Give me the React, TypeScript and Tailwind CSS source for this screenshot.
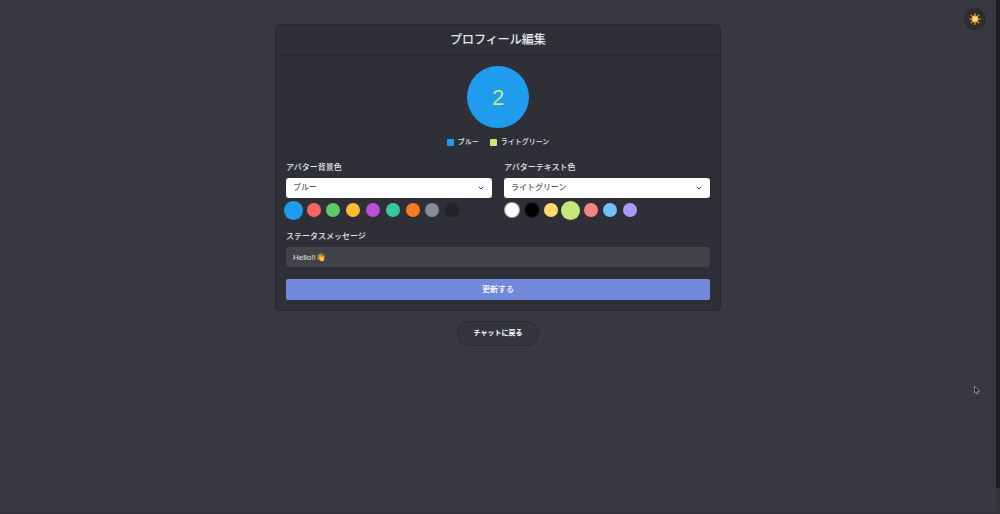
import { useState } from 'react';
import { ChevronDown } from 'lucide-react';

type ColorOption = { name: string; value: string; ring?: string };

const backgroundColors: ColorOption[] = [
  { name: 'ブルー', value: '#209cee' },
  { name: 'レッド', value: '#fc6468' },
  { name: 'グリーン', value: '#5bcb6c' },
  { name: 'イエロー', value: '#fdbd2e' },
  { name: 'パープル', value: '#b94fd6' },
  { name: 'ティール', value: '#38c99a' },
  { name: 'オレンジ', value: '#fb7a1e' },
  { name: 'グレー', value: '#868e96' },
  { name: 'ダーク', value: '#222427', ring: 'ring-1 ring-[#27292d]' },
];

const textColors: ColorOption[] = [
  { name: 'ホワイト', value: '#ffffff', ring: 'ring-1 ring-[#a5a7ab]' },
  { name: 'ブラック', value: '#020203', ring: 'ring-1 ring-[#222327]' },
  { name: 'ライトイエロー', value: '#ffdb6e' },
  { name: 'ライトグリーン', value: '#c3e978' },
  { name: 'ライトレッド', value: '#f98385' },
  { name: 'ライトブルー', value: '#74c0fa' },
  { name: 'ライトパープル', value: '#a99af8' },
];

type ColorFieldProps = {
  id: string;
  label: string;
  options: ColorOption[];
  value: string;
  columns: string;
  onChange: (value: string) => void;
};

function ColorField({ id, label, options, value, columns, onChange }: ColorFieldProps) {
  return (
    <div className="min-w-0 flex-1">
      <label htmlFor={id} className="block text-[8px] leading-3 font-medium">
        {label}
      </label>
      <div className="relative mt-1">
        <select
          id={id}
          value={value}
          onChange={(e) => onChange(e.target.value)}
          className="block h-5 w-full appearance-none rounded-[3px] bg-white px-[7px] text-[8px] font-medium text-[#5a6068]"
        >
          {options.map((option) => (
            <option key={option.value} value={option.value}>
              {option.name}
            </option>
          ))}
        </select>
        <ChevronDown className="pointer-events-none absolute top-1.5 right-[7px] size-2 text-[#495057]" strokeWidth={3} />
      </div>
      <div className={`-ml-0.5 mt-[2px] grid h-5 items-center justify-items-center ${columns}`}>
        {options.map((option) => (
          <button
            key={option.value}
            type="button"
            aria-label={option.name}
            onClick={() => onChange(option.value)}
            className={`rounded-full ${option.ring ?? ''} ${option.value === value ? 'size-[19px]' : 'size-[14px]'}`}
            style={{ backgroundColor: option.value }}
          />
        ))}
      </div>
    </div>
  );
}

function Legend({ color }: { color: ColorOption }) {
  return (
    <span className="flex items-center gap-1">
      <span className="size-[7px] rounded-[1px]" style={{ backgroundColor: color.value }} />
      {color.name}
    </span>
  );
}

export default function App() {
  const [background, setBackground] = useState('#209cee');
  const [text, setText] = useState('#c3e978');
  const [status, setStatus] = useState('Hello!!👋');

  const backgroundColor = backgroundColors.find((c) => c.value === background)!;
  const textColor = textColors.find((c) => c.value === text)!;

  return (
    <div className="flex h-screen overflow-hidden bg-[#383840] font-['Liberation_Sans','Noto_Sans_CJK_JP',sans-serif] text-[#e4e5e8]">
      <main className="relative flex min-w-0 flex-1 flex-col items-center border-b-3 border-[#33333b] px-4 pt-6">
        <button
          type="button"
          aria-label="テーマ切り替え"
          className="absolute top-2 right-[10px] flex size-[22px] items-center justify-center rounded-full bg-[#2c2d31]"
        >
          <svg viewBox="0 0 24 24" className="size-3">
            <path
              d="M12 1v22M1 12h22M4.2 4.2l15.6 15.6M19.8 4.2L4.2 19.8"
              stroke="#e8962c"
              strokeWidth="2.4"
              strokeLinecap="round"
            />
            <circle cx="12" cy="12" r="6.8" fill="#f9ae35" />
            <circle cx="12" cy="12" r="4.5" fill="#ffe07a" />
          </svg>
        </button>

        <section className="w-full max-w-[446px] rounded-[5px] border border-[#292a2f] bg-[#2f3037]">
          <h1 className="border-b border-[#292a2f] py-1.5 text-center text-[12px] leading-[18px] font-medium">
            プロフィール編集
          </h1>
          <form className="p-[10px]" onSubmit={(e) => e.preventDefault()}>
            <div
              className="mx-auto flex size-[62px] items-center justify-center rounded-full text-[22px]"
              style={{ backgroundColor: background, color: text }}
            >
              2
            </div>
            <div className="mt-2 flex justify-center gap-[11px] text-[7px] leading-3 font-medium">
              <Legend color={backgroundColor} />
              <Legend color={textColor} />
            </div>

            <div className="mt-[14px] flex gap-3">
              <ColorField
                id="background-color"
                label="アバター背景色"
                options={backgroundColors}
                value={background}
                columns="w-[178px] grid-cols-9"
                onChange={setBackground}
              />
              <ColorField
                id="text-color"
                label="アバターテキスト色"
                options={textColors}
                value={text}
                columns="w-[138px] grid-cols-7"
                onChange={setText}
              />
            </div>

            <label htmlFor="status" className="mt-[11px] block text-[8px] leading-3 font-medium">
              ステータスメッセージ
            </label>
            <input
              id="status"
              type="text"
              value={status}
              onChange={(e) => setStatus(e.target.value)}
              className="mt-1 block h-5 w-full rounded-[3px] bg-[#424348] px-[7px] text-[8px]"
            />
            <button
              type="submit"
              className="mt-3 block h-[21px] w-full rounded-[2px] bg-[#7289da] text-[8px] font-medium text-white"
            >
              更新する
            </button>
          </form>
        </section>

        <a
          href="#chat"
          className="mt-[10px] flex h-[25px] items-center rounded-full border border-[#2c2d32] bg-[#35363d] px-4 text-[7px] font-bold text-white"
        >
          チャットに戻る
        </a>

        {/* mouse pointer */}
        <svg viewBox="0 0 12 18" className="absolute top-[386px] left-[974px] h-[9px] w-[6px]">
          <path d="M1 1v13l3-3 2 5 3-1-2-5h4z" fill="#111" stroke="#aaa" strokeWidth="1.5" />
        </svg>
      </main>
      <div className="w-1 bg-[#33333a]">
        <div className="h-[95%] bg-[#1e1e22]" />
      </div>
    </div>
  );
}
